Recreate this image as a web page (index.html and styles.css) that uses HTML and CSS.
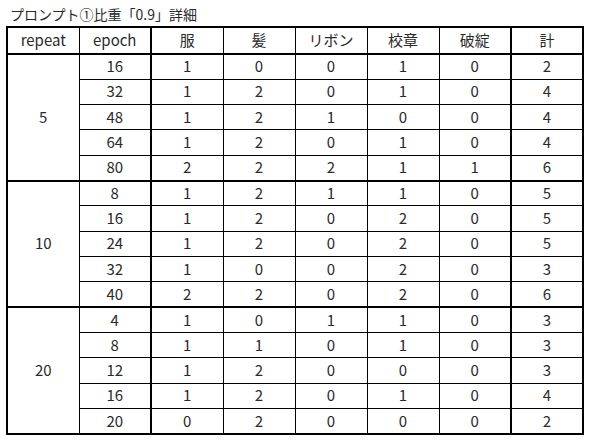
FILE: index.html
```html
<!DOCTYPE html>
<html lang="ja">
<head>
<meta charset="utf-8">
<title>プロンプト①比重「0.9」詳細</title>
<link rel="stylesheet" href="styles.css">
</head>
<body>
<div class="page">
  <div class="title">プロンプト①比重「0.9」詳細</div>
  <table class="grid">
    <colgroup>
      <col class="w">
      <col class="w thick">
      <col class="w">
      <col class="w">
      <col class="w">
      <col class="w">
      <col class="w thick">
      <col class="w">
    </colgroup>
    <thead>
      <tr><th>repeat</th><th>epoch</th><th>服</th><th>髪</th><th>リボン</th><th>校章</th><th>破綻</th><th>計</th></tr>
    </thead>
    <tbody>
      <tr><td rowspan="5">5</td><td>16</td><td>1</td><td>0</td><td>0</td><td>1</td><td>0</td><td>2</td></tr>
      <tr><td>32</td><td>1</td><td>2</td><td>0</td><td>1</td><td>0</td><td>4</td></tr>
      <tr><td>48</td><td>1</td><td>2</td><td>1</td><td>0</td><td>0</td><td>4</td></tr>
      <tr><td>64</td><td>1</td><td>2</td><td>0</td><td>1</td><td>0</td><td>4</td></tr>
      <tr><td>80</td><td>2</td><td>2</td><td>2</td><td>1</td><td>1</td><td>6</td></tr>
    </tbody>
    <tbody>
      <tr><td rowspan="5">10</td><td>8</td><td>1</td><td>2</td><td>1</td><td>1</td><td>0</td><td>5</td></tr>
      <tr><td>16</td><td>1</td><td>2</td><td>0</td><td>2</td><td>0</td><td>5</td></tr>
      <tr><td>24</td><td>1</td><td>2</td><td>0</td><td>2</td><td>0</td><td>5</td></tr>
      <tr><td>32</td><td>1</td><td>0</td><td>0</td><td>2</td><td>0</td><td>3</td></tr>
      <tr><td>40</td><td>2</td><td>2</td><td>0</td><td>2</td><td>0</td><td>6</td></tr>
    </tbody>
    <tbody>
      <tr><td rowspan="5">20</td><td>4</td><td>1</td><td>0</td><td>1</td><td>1</td><td>0</td><td>3</td></tr>
      <tr><td>8</td><td>1</td><td>1</td><td>0</td><td>1</td><td>0</td><td>3</td></tr>
      <tr><td>12</td><td>1</td><td>2</td><td>0</td><td>0</td><td>0</td><td>3</td></tr>
      <tr><td>16</td><td>1</td><td>2</td><td>0</td><td>1</td><td>0</td><td>4</td></tr>
      <tr><td>20</td><td>0</td><td>2</td><td>0</td><td>0</td><td>0</td><td>2</td></tr>
    </tbody>
  </table>
</div>
</body>
</html>
```
FILE: styles.css
```css
html, body {
  margin: 0;
  padding: 0;
  background: #ffffff;
}
body {
  font-family: "Noto Sans CJK JP", "Noto Sans", sans-serif;
  color: #2a2a2a;
}
.page {
  padding: 4px 0 0 6px;
}
.title {
  height: 22px;
  line-height: 20px;
  font-size: 14px;
  padding-left: 4px;
  white-space: nowrap;
}
.grid {
  border-collapse: collapse;
  table-layout: fixed;
  width: 578px;
  border: 2px solid #000;
  font-size: 15px;
}
.grid col.w {
  width: 72px;
}
.grid col.thick {
  border-right: 2px solid #000;
}
.grid thead {
  border-bottom: 2px solid #000;
}
.grid tbody {
  border-bottom: 2px solid #000;
}
.grid th,
.grid td {
  border: 1px solid #000;
  padding: 0 0 1px;
  text-align: center;
  vertical-align: middle;
  font-weight: normal;
  line-height: 18px;
}
.grid thead tr {
  height: 27px;
}
.grid tbody tr {
  height: 25.33px;
}
```
